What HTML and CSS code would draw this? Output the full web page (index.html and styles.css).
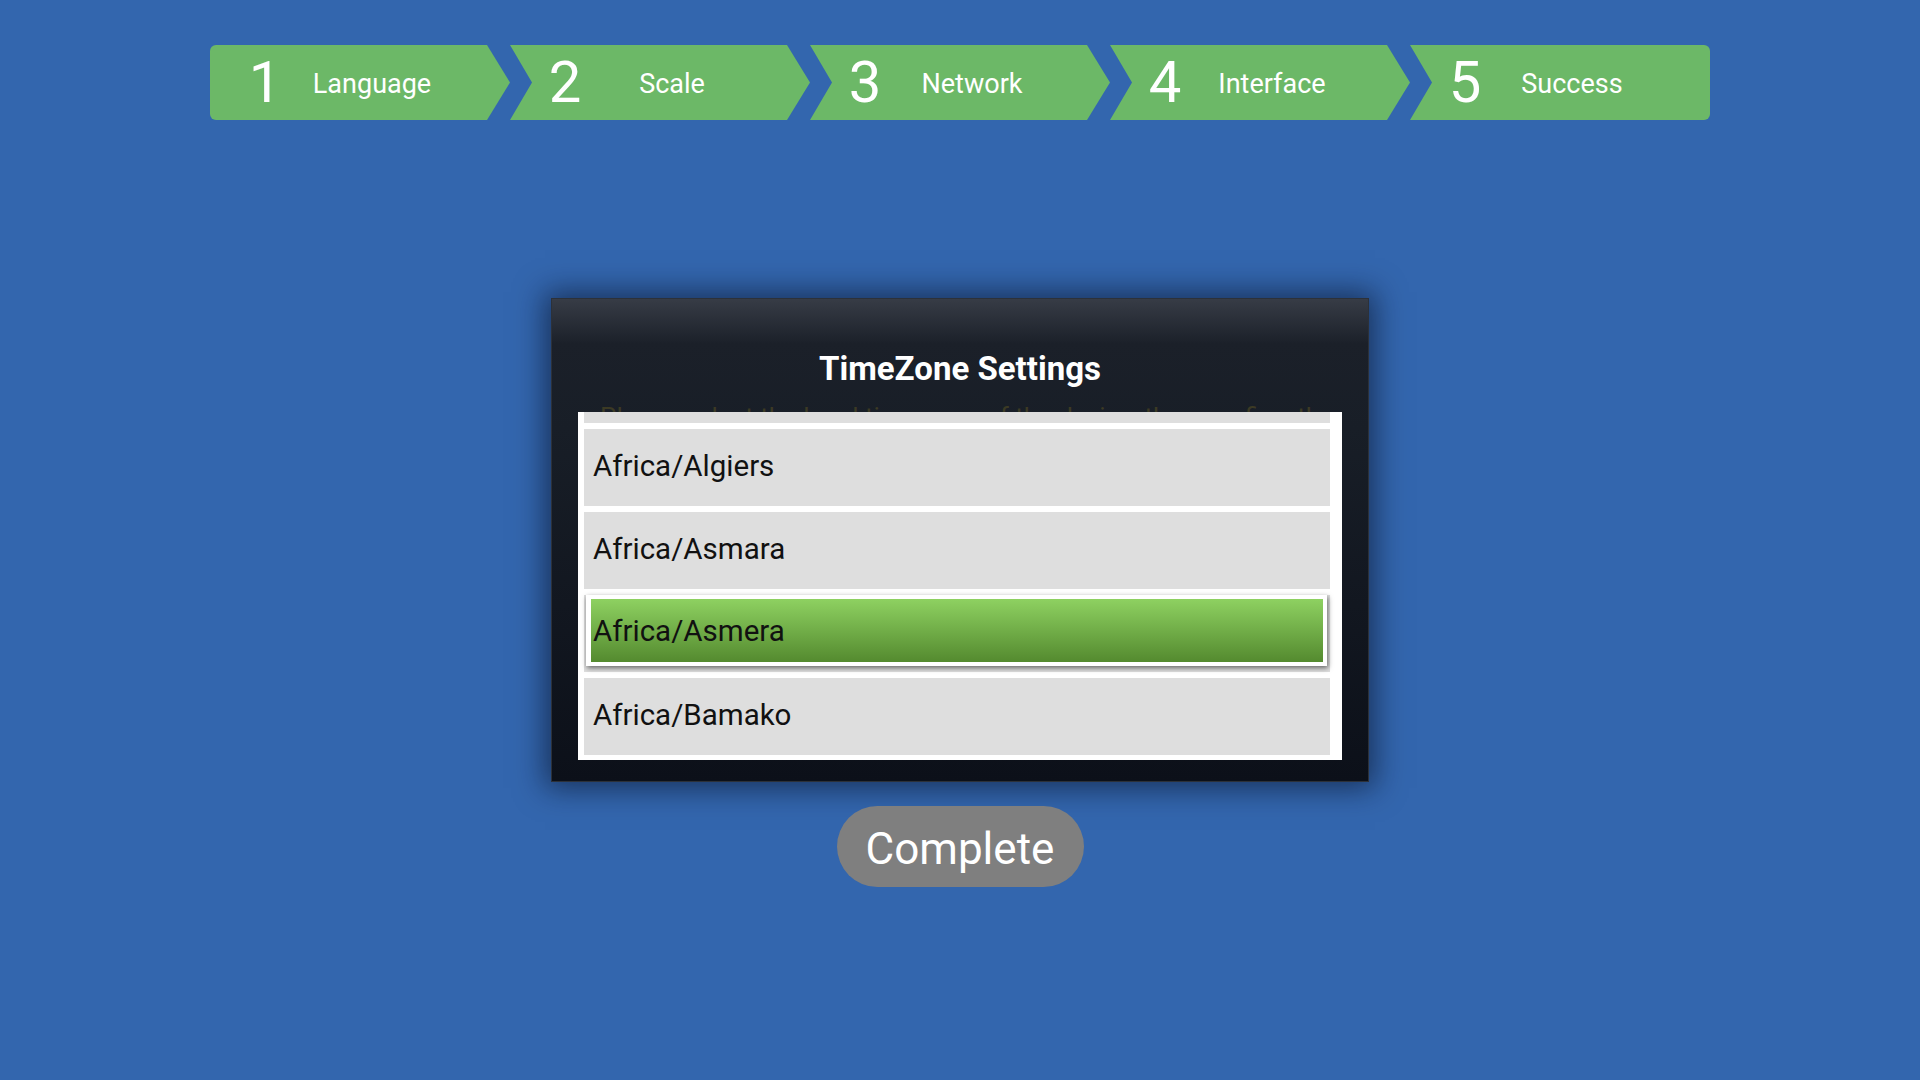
FILE: index.html
```html
<!DOCTYPE html>
<html lang="en">
<head>
  <meta charset="UTF-8">
  <title>TimeZone Settings</title>
  <link rel="stylesheet" href="styles.css">
</head>
<body>

  <div class="steps">
    <div class="step first"><span class="num">1</span><span class="label">Language</span></div>
    <div class="step"><span class="num">2</span><span class="label">Scale</span></div>
    <div class="step"><span class="num">3</span><span class="label">Network</span></div>
    <div class="step"><span class="num">4</span><span class="label">Interface</span></div>
    <div class="step last"><span class="num">5</span><span class="label">Success</span></div>
  </div>

  <div class="dialog">
    <h2>TimeZone Settings</h2>
    <p class="hint">Please select the local time zone of the device, then confirm the settings ?</p>
    <div class="list">
      <div class="list-inner">
        <div class="item">Africa/Addis_Ababa</div>
        <div class="item">Africa/Algiers</div>
        <div class="item">Africa/Asmara</div>
        <div class="item selected"><div class="sel">Africa/Asmera</div></div>
        <div class="item">Africa/Bamako</div>
      </div>
    </div>
  </div>

  <div class="complete">Complete</div>

</body>
</html>
```

FILE: styles.css
```css
body {
  margin: 0;
  height: 1080px;
  background-color: #3366ae;
  font-family: Roboto, "Liberation Sans", sans-serif;
  display: flex;
  flex-direction: column;
  align-items: center;
}

/* step bar */
.steps {
  display: flex;
  width: 1500px;
  margin-top: 45px;
}
.step {
  width: 300px;
  height: 75px;
  background-color: #6cb867;
  color: #fff;
  display: flex;
  align-items: center;
  clip-path: polygon(0 0, 277px 0, 300px 50%, 277px 100%, 0 100%, 22px 50%);
}
.step.first {
  border-radius: 6px 0 0 6px;
  clip-path: polygon(0 0, 277px 0, 300px 50%, 277px 100%, 0 100%);
}
.step.last {
  border-radius: 0 6px 6px 0;
  clip-path: polygon(0 0, 100% 0, 100% 100%, 0 100%, 22px 50%);
}
.num {
  width: 110px;
  display: flex;
  justify-content: center;
  font-size: 58px;
  line-height: 75px;
}
.label {
  width: 104px;
  display: flex;
  justify-content: center;
  white-space: nowrap;
  font-size: 27px;
  padding-top: 2px;
}

/* dialog */
.dialog {
  box-sizing: border-box;
  width: 818px;
  height: 484px;
  margin-top: 178px;
  padding: 50px 26px 0 26px;
  border: 1px solid #2c3139;
  background: linear-gradient(#373c46 0, #1b2029 45px, #181e27 130px, #0c1019 100%);
  box-shadow: 0 0 28px 6px rgba(8, 16, 36, 0.6);
}
.dialog h2 {
  margin: 0;
  color: #fff;
  font-size: 33px;
  line-height: 40px;
  text-align: center;
  font-weight: bold;
}
.hint {
  margin: 13px 0 0 0;
  height: 10px;
  overflow: hidden;
  color: #3c3a24;
  font-size: 26px;
  line-height: 30px;
  white-space: nowrap;
  padding-left: 22px;
}
.list {
  height: 348px;
  background-color: #fff;
  padding: 0 12px 0 6px;
  overflow: hidden;
}
.list-inner {
  margin-top: -66px;
}
.item {
  box-sizing: border-box;
  height: 77px;
  margin-bottom: 6px;
  background-color: #dedede;
  color: #111;
  font-size: 29.5px;
  padding: 0 0 4px 9px;
  display: flex;
  align-items: center;
}
.item.selected {
  padding: 0 3px 6px 2px;
  align-items: stretch;
}
.sel {
  flex: 1;
  border: 4px solid #fff;
  border-left-width: 5px;
  padding-left: 2px;
  display: flex;
  align-items: center;
  background: linear-gradient(#8ed161, #548a2f);
  box-shadow: 1px 2px 5px rgba(0, 0, 0, 0.55);
}

/* button */
.complete {
  box-sizing: border-box;
  margin-top: 24px;
  width: 247px;
  height: 81px;
  padding-top: 4px;
  border-radius: 41px;
  background-color: #7f7f7f;
  color: #fff;
  font-size: 44px;
  display: flex;
  align-items: center;
  justify-content: center;
}
```
